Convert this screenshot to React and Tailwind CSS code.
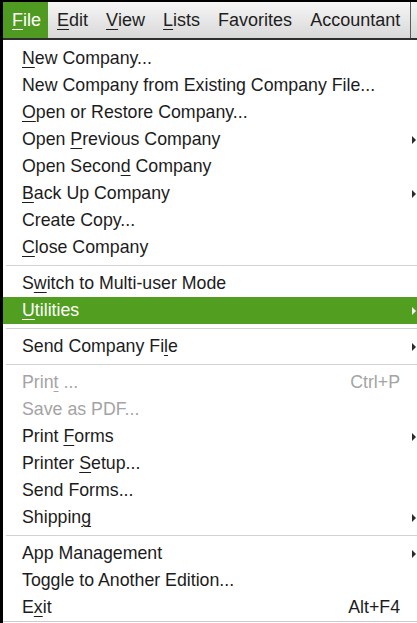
import React from "react";

const barItems = [
  { label: "File", key: "F", active: true },
  { label: "Edit", key: "E" },
  { label: "View", key: "V" },
  { label: "Lists", key: "L" },
  { label: "Favorites" },
  { label: "Accountant" },
];

// groups of menu rows, separated by lines
const groups = [
  [
    { label: "New Company...", u: 0 },
    { label: "New Company from Existing Company File..." },
    { label: "Open or Restore Company...", u: 0 },
    { label: "Open Previous Company", u: 5, sub: true },
    { label: "Open Second Company", u: 10 },
    { label: "Back Up Company", u: 0, sub: true },
    { label: "Create Copy..." },
    { label: "Close Company", u: 0 },
  ],
  [
    { label: "Switch to Multi-user Mode", u: 1 },
    { label: "Utilities", u: 0, sub: true, active: true },
  ],
  [{ label: "Send Company File", u: 15, sub: true }],
  [
    { label: "Print ...", u: 4, disabled: true, shortcut: "Ctrl+P" },
    { label: "Save as PDF...", disabled: true },
    { label: "Print Forms", u: 6, sub: true },
    { label: "Printer Setup...", u: 8 },
    { label: "Send Forms..." },
    { label: "Shipping", u: 7, sub: true },
  ],
  [
    { label: "App Management", sub: true },
    { label: "Toggle to Another Edition..." },
    { label: "Exit", u: 1, shortcut: "Alt+F4" },
  ],
];

function Mnemonic({ text, index }) {
  if (index === undefined) return text;
  return (
    <>
      {text.slice(0, index)}
      <span className="underline decoration-1 underline-offset-[3px]">
        {text[index]}
      </span>
      {text.slice(index + 1)}
    </>
  );
}

function Arrow({ color }) {
  return (
    <svg width="4" height="8" viewBox="0 0 4 8">
      <path d="M0 0 L4 4 L0 8 Z" fill={color} />
    </svg>
  );
}

function MenuRow({ item }) {
  const textColor = item.active
    ? "text-white"
    : item.disabled
    ? "text-[#a4a4a4]"
    : "text-[#1c1c1c]";
  return (
    <div
      className={`flex items-center h-[27px] pl-[19px] ${
        item.active ? "bg-[#519e20]" : ""
      } ${textColor}`}
    >
      <span className="whitespace-nowrap">
        <Mnemonic text={item.label} index={item.u} />
      </span>
      <div className="flex-1" />
      {item.shortcut && (
        <span className="whitespace-nowrap">{item.shortcut}</span>
      )}
      <div className="w-[17px] flex justify-end pr-[1px]">
        {item.sub && <Arrow color={item.active ? "#ffffff" : "#2a2a2a"} />}
      </div>
    </div>
  );
}

export default function App() {
  return (
    <div className="w-[417px] h-[623px] bg-black overflow-hidden font-['Liberation_Sans',Arial,sans-serif] text-[17.75px] leading-[27px]">
      <div className="h-[2px]" />
      <div className="flex h-[36px] ml-[3px] bg-linear-to-b from-[#f6f6f6] to-[#d8d8d8] text-[#1e1e1e] text-[18px]">
        {barItems.map((b) => (
          <div
            key={b.label}
            className={`flex items-center whitespace-nowrap ${
              b.active ? "bg-[#4f9a21] text-white pl-[9px] pr-[7px]" : "px-[9px]"
            }`}
          >
            <Mnemonic text={b.label} index={b.key ? 0 : undefined} />
          </div>
        ))}
        <div className="w-px bg-[#5a5a5a] ml-[1px]" />
      </div>
      <div className="h-[2px] ml-[3px] bg-[#2e2e2e]" />
      <div className="ml-[3px] h-[583px] bg-white pt-[5px]">
        {groups.map((g, gi) => (
          <div key={gi}>
            {gi > 0 && (
              <div className="h-[9px] flex items-center pl-[3px]">
                <div className="h-px w-full bg-[#d2d2d2]" />
              </div>
            )}
            {g.map((item) => (
              <MenuRow key={item.label} item={item} />
            ))}
          </div>
        ))}
        <div className="h-px bg-[#c8ccd4]" />
      </div>
    </div>
  );
}
